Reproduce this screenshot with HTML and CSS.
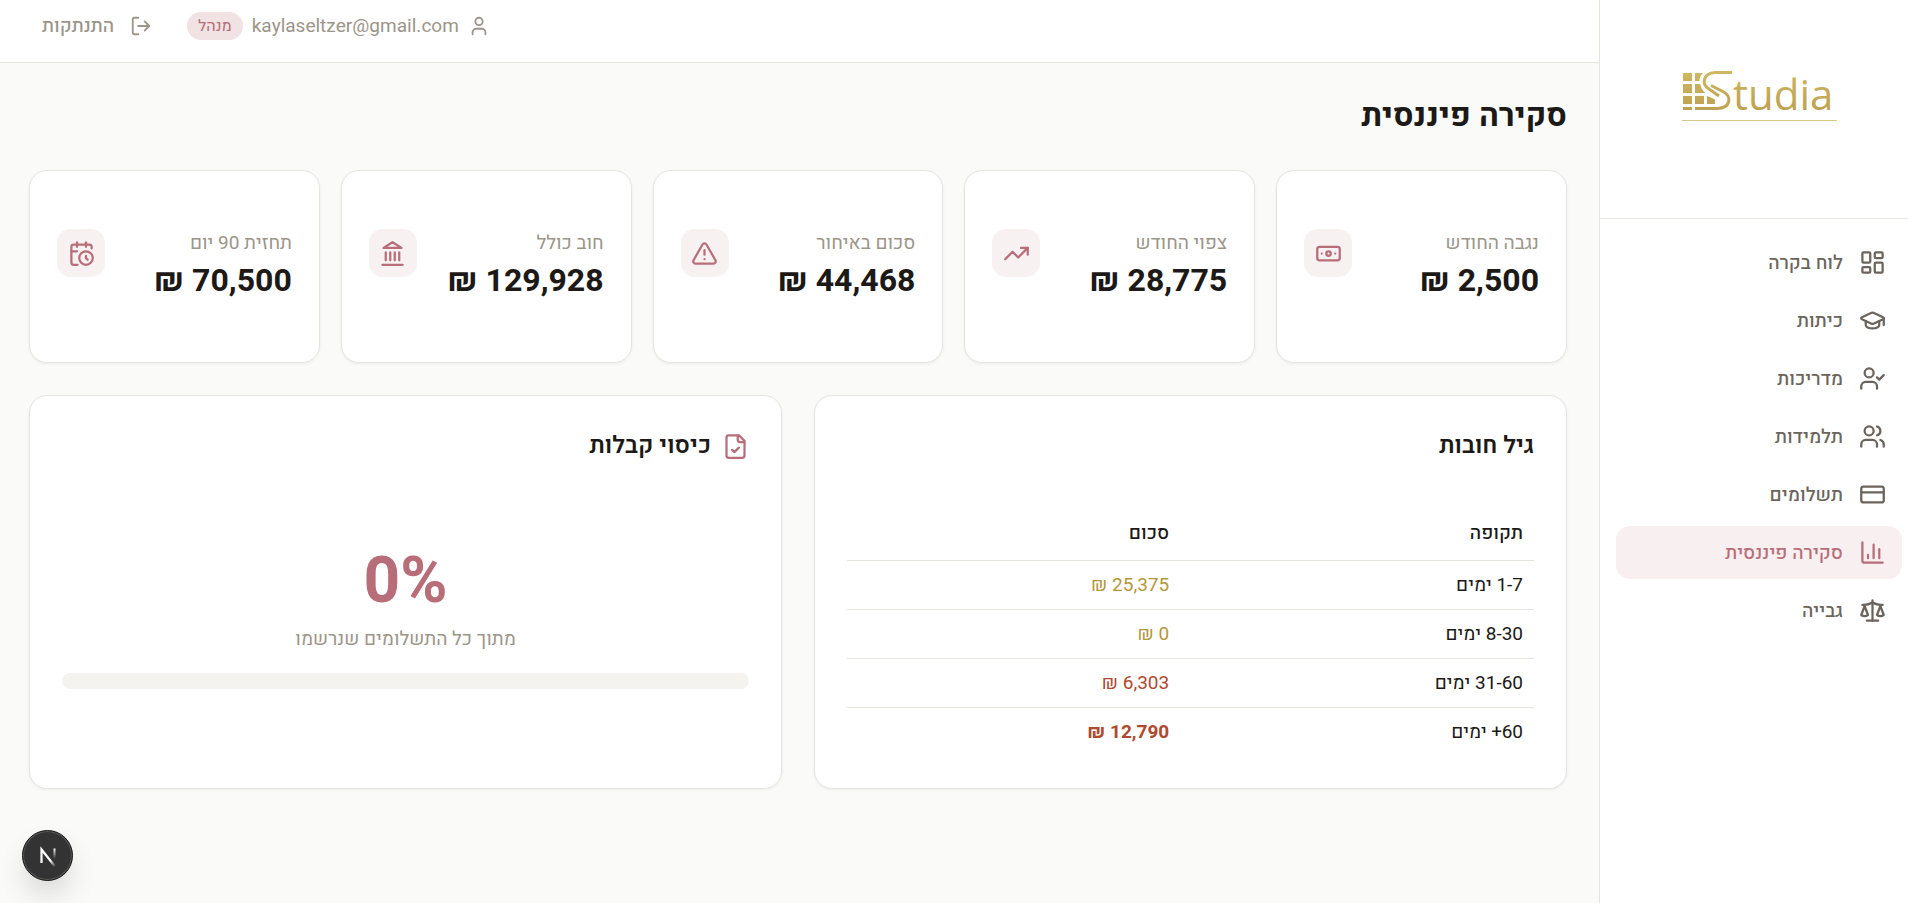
FILE: index.html
```html
<!DOCTYPE html>
<html lang="he" dir="rtl">
<head>
<meta charset="utf-8">
<meta name="viewport" content="width=device-width, initial-scale=1">
<title>סקירה פיננסית</title>
<link rel="stylesheet" href="styles.css">
</head>
<body>
<div class="app">
  <aside class="sidebar">
    <div class="brand">
      <svg class="brand-logo" viewBox="0 0 155 52" role="img" aria-label="Studia">
        <defs>
          <linearGradient id="gold" x1="0" y1="0" x2="0" y2="42" gradientUnits="userSpaceOnUse">
            <stop offset="0" stop-color="#cfb962"/>
            <stop offset="1" stop-color="#bd9f50"/>
          </linearGradient>
        </defs>
        <g fill="url(#gold)">
          <path d="M1 3h9v8H1zM13 3h8q-4 4-3.500 8H13zM1 14h9v9H1zM13 14h5q1 5 5 9H13zM1 26h9v8H1zM13 26h9v8H13zM25 26q4 1 8 3.500V34H25zM1 37h9v3H1z"/>
        </g>
        <path d="M50 2.500H33C21 3.500 19 14 27 19L37 26M29 15.500L41 21.500C51 27 48 38.500 35 38.500H13" fill="none" stroke="url(#gold)" stroke-width="3"/>
        <text class="brand-word" x="51" y="40" direction="ltr" fill="url(#gold)">tudia</text>
        <path d="M0 50.500h155" stroke="#d9c787" stroke-width="1"/>
      </svg>
    </div>
    <nav class="nav">
      <a class="nav-item" href="#">
        <svg class="icon" viewBox="0 0 24 24"><rect width="7" height="9" x="3" y="3" rx="1"/><rect width="7" height="5" x="14" y="3" rx="1"/><rect width="7" height="9" x="14" y="12" rx="1"/><rect width="7" height="5" x="3" y="16" rx="1"/></svg>
        <span>לוח בקרה</span>
      </a>
      <a class="nav-item" href="#">
        <svg class="icon" viewBox="0 0 24 24"><path d="M21.420 10.922a1 1 0 0 0-.019-1.838L12.830 5.180a2 2 0 0 0-1.660 0L2.600 9.080a1 1 0 0 0 0 1.832l8.570 3.908a2 2 0 0 0 1.660 0z"/><path d="M22 10v6"/><path d="M6 12.500V16a6 3 0 0 0 12 0v-3.500"/></svg>
        <span>כיתות</span>
      </a>
      <a class="nav-item" href="#">
        <svg class="icon" viewBox="0 0 24 24"><path d="m16 11 2 2 4-4"/><path d="M16 21v-2a4 4 0 0 0-4-4H6a4 4 0 0 0-4 4v2"/><circle cx="9" cy="7" r="4"/></svg>
        <span>מדריכות</span>
      </a>
      <a class="nav-item" href="#">
        <svg class="icon" viewBox="0 0 24 24"><path d="M16 21v-2a4 4 0 0 0-4-4H6a4 4 0 0 0-4 4v2"/><circle cx="9" cy="7" r="4"/><path d="M22 21v-2a4 4 0 0 0-3-3.870"/><path d="M16 3.130a4 4 0 0 1 0 7.750"/></svg>
        <span>תלמידות</span>
      </a>
      <a class="nav-item" href="#">
        <svg class="icon" viewBox="0 0 24 24"><rect width="20" height="14" x="2" y="5" rx="2"/><path d="M2 10h20"/></svg>
        <span>תשלומים</span>
      </a>
      <a class="nav-item nav-item-active" href="#" aria-current="page">
        <svg class="icon" viewBox="0 0 24 24"><path d="M3 3v16a2 2 0 0 0 2 2h16"/><path d="M18 17V9"/><path d="M13 17V5"/><path d="M8 17v-3"/></svg>
        <span>סקירה פיננסית</span>
      </a>
      <a class="nav-item" href="#">
        <svg class="icon" viewBox="0 0 24 24"><path d="m16 16 3-8 3 8c-.870.650-1.920 1-3 1s-2.130-.350-3-1Z"/><path d="m2 16 3-8 3 8c-.870.650-1.920 1-3 1s-2.130-.350-3-1Z"/><path d="M7 21h10"/><path d="M12 3v18"/><path d="M3 7h2c2 0 5-1 7-2 2 1 5 2 7 2h2"/></svg>
        <span>גבייה</span>
      </a>
    </nav>
  </aside>

  <div class="page">
    <header class="topbar">
      <div class="user">
        <svg class="icon icon-small" viewBox="0 0 24 24"><path d="M19 21v-2a4 4 0 0 0-4-4H9a4 4 0 0 0-4 4v2"/><circle cx="12" cy="7" r="4"/></svg>
        <span class="user-email">kaylaseltzer@gmail.com</span>
        <span class="badge">מנהל</span>
      </div>
      <button class="logout" type="button">
        <svg class="icon icon-small" viewBox="0 0 24 24"><path d="M9 21H5a2 2 0 0 1-2-2V5a2 2 0 0 1 2-2h4"/><path d="m16 17 5-5-5-5"/><path d="M21 12H9"/></svg>
        <span>התנתקות</span>
      </button>
    </header>

    <main class="content">
      <h1 class="title">סקירה פיננסית</h1>

      <section class="stats">
        <article class="card stat">
          <div>
            <p class="stat-label">נגבה החודש</p>
            <p class="stat-value">2,500 ₪</p>
          </div>
          <span class="stat-icon"><svg class="icon" viewBox="0 0 24 24"><rect width="20" height="12" x="2" y="6" rx="2"/><circle cx="12" cy="12" r="2"/><path d="M6 12h.01M18 12h.01"/></svg></span>
        </article>
        <article class="card stat">
          <div>
            <p class="stat-label">צפוי החודש</p>
            <p class="stat-value">28,775 ₪</p>
          </div>
          <span class="stat-icon"><svg class="icon" viewBox="0 0 24 24"><path d="M22 7 13.500 15.500l-5-5L2 17"/><path d="M16 7h6v6"/></svg></span>
        </article>
        <article class="card stat">
          <div>
            <p class="stat-label">סכום באיחור</p>
            <p class="stat-value">44,468 ₪</p>
          </div>
          <span class="stat-icon"><svg class="icon" viewBox="0 0 24 24"><path d="m21.730 18-8-14a2 2 0 0 0-3.480 0l-8 14A2 2 0 0 0 4 21h16a2 2 0 0 0 1.730-3"/><path d="M12 9v4"/><path d="M12 17h.01"/></svg></span>
        </article>
        <article class="card stat">
          <div>
            <p class="stat-label">חוב כולל</p>
            <p class="stat-value">129,928 ₪</p>
          </div>
          <span class="stat-icon"><svg class="icon" viewBox="0 0 24 24"><path d="M3 22h18"/><path d="M6 18v-7"/><path d="M10 18v-7"/><path d="M14 18v-7"/><path d="M18 18v-7"/><path d="m12 2 8 5H4Z"/></svg></span>
        </article>
        <article class="card stat">
          <div>
            <p class="stat-label">תחזית 90 יום</p>
            <p class="stat-value">70,500 ₪</p>
          </div>
          <span class="stat-icon"><svg class="icon" viewBox="0 0 24 24"><path d="M21 7.500V6a2 2 0 0 0-2-2H5a2 2 0 0 0-2 2v14a2 2 0 0 0 2 2h3.500"/><path d="M16 2v4"/><path d="M8 2v4"/><path d="M3 10h5"/><path d="M17.500 17.500 16 16.300V14"/><circle cx="16" cy="16" r="6"/></svg></span>
        </article>
      </section>

      <section class="panels">
        <article class="card panel">
          <h2 class="panel-title">גיל חובות</h2>
          <table class="aging">
            <thead>
              <tr><th scope="col">תקופה</th><th scope="col">סכום</th></tr>
            </thead>
            <tbody>
              <tr><td>1-7 ימים</td><td class="amount-warn">25,375 ₪</td></tr>
              <tr><td>8-30 ימים</td><td class="amount-warn">0 ₪</td></tr>
              <tr><td>31-60 ימים</td><td class="amount-late">6,303 ₪</td></tr>
              <tr><td>60+ ימים</td><td class="amount-late amount-strong">12,790 ₪</td></tr>
            </tbody>
          </table>
        </article>
        <article class="card panel">
          <h2 class="panel-title">
            <svg class="icon icon-accent" viewBox="0 0 24 24"><path d="M15 2H6a2 2 0 0 0-2 2v16a2 2 0 0 0 2 2h12a2 2 0 0 0 2-2V7Z"/><path d="M14 2v4a2 2 0 0 0 2 2h4"/><path d="m9 15 2 2 4-4"/></svg>
            <span>כיסוי קבלות</span>
          </h2>
          <div class="coverage">
            <p class="coverage-value" dir="ltr">0%</p>
            <p class="coverage-note">מתוך כל התשלומים שנרשמו</p>
            <div class="track" role="progressbar" aria-label="כיסוי קבלות" aria-valuemin="0" aria-valuemax="100" aria-valuenow="0"></div>
          </div>
        </article>
      </section>
    </main>
  </div>
</div>

<button class="dev-button" type="button" aria-label="Next.js">
  <svg class="dev-mark" viewBox="0 0 24 24">
    <defs>
      <linearGradient id="fadeA" x1="15" y1="16" x2="20" y2="22" gradientUnits="userSpaceOnUse"><stop offset="0" stop-color="#fff"/><stop offset="1" stop-color="#fff" stop-opacity="0"/></linearGradient>
      <linearGradient id="fadeB" x1="0" y1="4" x2="0" y2="15" gradientUnits="userSpaceOnUse"><stop offset="0" stop-color="#fff"/><stop offset="1" stop-color="#fff" stop-opacity="0"/></linearGradient>
    </defs>
    <path d="M5.500 19V5.500L19 22.500" fill="none" stroke="url(#fadeA)" stroke-width="2.200"/>
    <path d="M18.500 4.500V15" fill="none" stroke="url(#fadeB)" stroke-width="2"/>
  </svg>
</button>
</body>
</html>
```
FILE: styles.css
```css
* {
  box-sizing: border-box;
}

body {
  margin: 0;
  background: #fafaf8;
  color: #1c1917;
  font-family: Heebo, Roboto, "Open Sans", sans-serif;
  font-size: 19px;
  line-height: 28px;
}

h1,
h2,
p {
  margin: 0;
}

.app {
  display: flex;
  min-height: 100vh;
}

.icon {
  width: 27px;
  height: 27px;
  flex: none;
  fill: none;
  stroke: currentColor;
  stroke-width: 2;
  stroke-linecap: round;
  stroke-linejoin: round;
}

.icon-small {
  width: 22px;
  height: 22px;
}

.icon-accent {
  color: #b76e79;
}

/* Sidebar */

.sidebar {
  flex: none;
  width: 309px;
  background: #fff;
  border-left: 1px solid #e5e5e0;
}

.brand {
  display: flex;
  justify-content: center;
  padding: 70px 0 96px 11px;
  border-bottom: 1px solid #e5e5e0;
}

.brand-logo {
  width: 155px;
  height: 52px;
  overflow: visible;
}

.brand-word {
  font-family: "Open Sans", sans-serif;
  font-size: 42px;
}

.nav {
  display: flex;
  flex-direction: column;
  gap: 5px;
  padding: 17px 6px 16px 16px;
}

.nav-item {
  display: flex;
  align-items: center;
  gap: 16px;
  height: 53px;
  padding: 0 16px;
  border-radius: 14px;
  color: #6b645c;
  font-weight: 500;
  text-decoration: none;
}

.nav-item-active {
  background: #f8eff0;
  color: #b76e79;
}

/* Top bar */

.page {
  flex: 1;
  min-width: 0;
}

.topbar {
  display: flex;
  justify-content: flex-end;
  align-items: center;
  gap: 22px;
  padding: 7px 29px 18px;
  background: #fff;
  border-bottom: 1px solid #e5e5e0;
  color: #9c958a;
}

.user {
  display: flex;
  align-items: center;
  gap: 9px;
}

.badge {
  padding: 0 11px;
  border-radius: 14px;
  background: #f1e2e4;
  color: #b76e79;
  font-size: 16px;
}

.logout {
  display: flex;
  align-items: center;
  gap: 16px;
  height: 37px;
  padding: 0 13px;
  border: 0;
  background: none;
  color: inherit;
  font: inherit;
  font-weight: 500;
}

/* Content */

.content {
  padding: 33px 32px 32px 29px;
}

.title {
  margin-bottom: 35px;
  font-size: 32px;
  line-height: 39px;
  font-weight: 700;
}

.card {
  background: #fff;
  border: 1px solid #e5e5e0;
  border-radius: 18px;
  box-shadow: 0 1px 3px rgba(0, 0, 0, 0.06);
}

.stats {
  display: grid;
  grid-template-columns: repeat(5, 1fr);
  gap: 21px;
}

.stat {
  display: flex;
  justify-content: space-between;
  align-items: flex-start;
  padding: 58px 27px 61px;
}

.stat-label {
  color: #9c958a;
}

.stat-value {
  margin-top: 4px;
  font-size: 32px;
  line-height: 40px;
  font-weight: 700;
}

.stat-icon {
  display: grid;
  place-items: center;
  width: 48px;
  height: 48px;
  border-radius: 14px;
  background: #f8f1f2;
  color: #b76e79;
}

.panels {
  display: grid;
  grid-template-columns: repeat(2, 1fr);
  gap: 32px;
  margin-top: 32px;
}

.panel {
  padding: 32px;
}

.panel-title {
  display: flex;
  align-items: center;
  gap: 11px;
  font-size: 24px;
  line-height: 36px;
  font-weight: 600;
}

.aging {
  width: 100%;
  margin-top: 42px;
  border-collapse: collapse;
  table-layout: fixed;
}

.aging th,
.aging td {
  padding: 10px 11px;
  text-align: start;
  border-bottom: 1px solid #e5e5e0;
}

.aging th {
  padding: 13px 11px;
  font-weight: 500;
}

.aging tr > :first-child {
  width: 51.5%;
}

.aging tbody tr:last-child td {
  border-bottom: 0;
}

.aging .amount-warn {
  color: #b5973a;
}

.aging .amount-late {
  color: #b04a2f;
}

.aging .amount-strong {
  font-weight: 700;
}

.coverage {
  padding-top: 82px;
  text-align: center;
}

.coverage-value {
  color: #b76e79;
  font-size: 64px;
  line-height: 72px;
  font-weight: 700;
}

.coverage-note {
  margin-top: 7px;
  color: #9c958a;
}

.track {
  height: 16px;
  margin-top: 20px;
  border-radius: 8px;
  background: #f4f3ef;
}

.dev-button {
  position: fixed;
  left: 22px;
  bottom: 22px;
  display: grid;
  place-items: center;
  width: 51px;
  height: 51px;
  padding: 0;
  border: 1px solid #171717;
  border-radius: 50%;
  background: #333;
  box-shadow: inset 0 0 0 1px #5a5a5a, 0 16px 32px -8px rgba(0, 0, 0, 0.24);
}

.dev-mark {
  width: 24px;
  height: 24px;
}
```
